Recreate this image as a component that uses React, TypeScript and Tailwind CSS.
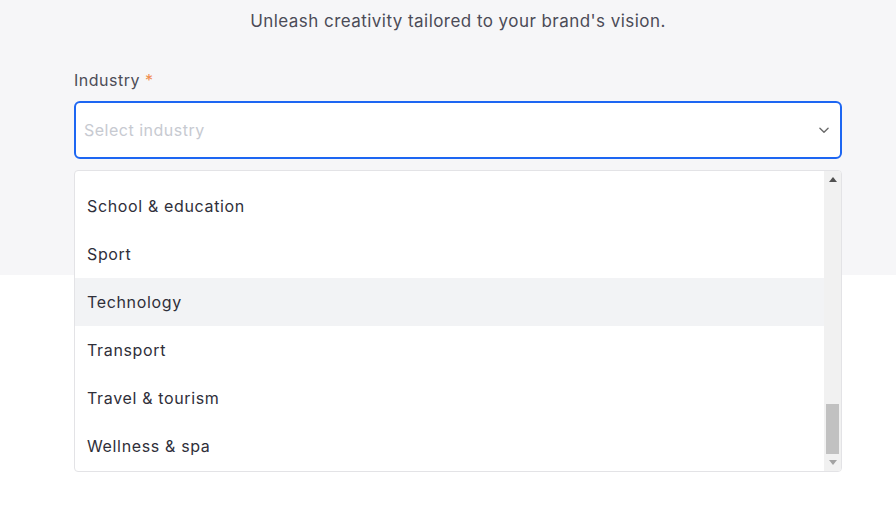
import React from "react";

const items = [
  "School & education",
  "Sport",
  "Technology",
  "Transport",
  "Travel & tourism",
  "Wellness & spa",
];

export default function App() {
  return (
    <div
      className="relative w-[896px] h-[524px] overflow-hidden bg-white"
      style={{ fontFamily: "Inter, 'Open Sans', sans-serif" }}
    >
      <div className="h-[275px] bg-[#f6f6f8]">
        <div className="pl-[74px] w-[842px]">
          <p className="pt-[9px] text-center text-[17px] leading-[24px] text-[#4b4b57] tracking-[0.45px]">
            Unleash creativity tailored to your brand's vision.
          </p>
          <div className="mt-[35px] text-[16px] leading-[24px] text-[#4d4d57] tracking-[0.5px]">
            Industry <span className="text-[#f08c4f]">*</span>
          </div>
          <div className="mt-[9px] h-[58px] rounded-[6px] border-2 border-[#1d66f2] bg-white flex items-center justify-between pl-[8px] pr-[9px]">
            <span className="text-[16px] text-[#c7cad1] tracking-[0.5px] -mt-[1px]">Select industry</span>
            <svg width="14" height="14" viewBox="0 0 24 24" fill="none" stroke="#6b6b6b" strokeWidth="2.4" strokeLinecap="round" strokeLinejoin="round">
              <path d="M5 9l7 7 7-7" />
            </svg>
          </div>
        </div>
      </div>
      <div className="absolute left-[74px] top-[170px] w-[768px] h-[302px] rounded-[4px] border border-[#e3e3e6] bg-white flex overflow-hidden">
        <div className="flex-1 flex flex-col pt-[11px]">
          {items.map((it) => (
            <div
              key={it}
              className={`h-[48px] flex items-center pl-[12px] text-[16px] text-[#2f2f3a] tracking-[0.65px] ${
                it === "Technology" ? "bg-[#f2f3f5]" : ""
              }`}
            >
              {it}
            </div>
          ))}
        </div>
        <div className="w-[17px] bg-[#f1f1f1] flex flex-col items-center">
          <div className="h-[17px] flex items-center justify-center">
            <svg width="8" height="5" viewBox="0 0 8 5"><path d="M0 5L4 0L8 5Z" fill="#505050" /></svg>
          </div>
          <div className="flex-1 w-full relative">
            <div className="absolute left-[2px] right-[2px] top-[216px] h-[50px] bg-[#c1c1c1]" />
          </div>
          <div className="h-[17px] flex items-center justify-center">
            <svg width="8" height="5" viewBox="0 0 8 5"><path d="M0 0L8 0L4 5Z" fill="#a3a3a3" /></svg>
          </div>
        </div>
      </div>
    </div>
  );
}
